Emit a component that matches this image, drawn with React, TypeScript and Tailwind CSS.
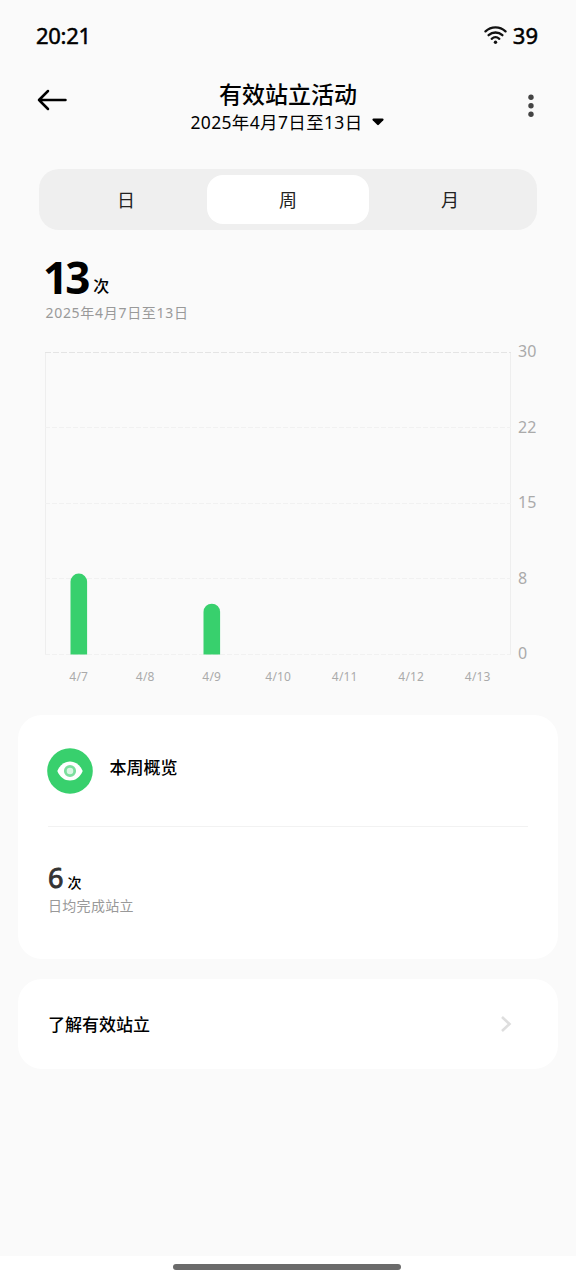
const FONT = "font-['Noto_Sans','Noto_Sans_CJK_SC',sans-serif]";

const tabs = ["日", "周", "月"];

const days = [
  { label: "4/7", count: 8 },
  { label: "4/8", count: 0 },
  { label: "4/9", count: 5 },
  { label: "4/10", count: 0 },
  { label: "4/11", count: 0 },
  { label: "4/12", count: 0 },
  { label: "4/13", count: 0 },
];

const ticks = ["30", "22", "15", "8", "0"];
const MAX = 30;

function StatusBar() {
  return (
    <div className="flex h-[70px] items-center justify-between pl-[36px] pr-[38px] text-[22px] [-webkit-text-stroke:0.5px_black]">
      <span className="tracking-[-0.3px]">20:21</span>
      <div className="flex items-center gap-[6px]">
        <svg width="23" height="19" viewBox="0 0 23 19" fill="none" stroke="#111" strokeWidth="2.3" strokeLinecap="round">
          <path d="M1.5 5.4C7.2.1 15.8.1 21.5 5.4" />
          <path d="M4.6 9.2c4-3.6 9.8-3.6 13.8 0" />
          <path d="M7.7 12.8c2.3-2 5.3-2 7.6 0" />
          <circle cx="11.5" cy="16.2" r="1.7" fill="#111" stroke="none" />
        </svg>
        <span>39</span>
      </div>
    </div>
  );
}

function Header() {
  return (
    <header className="flex h-[99px] items-start justify-between pl-[37px] pr-[42px]">
      <svg className="mt-[19px]" width="31" height="22" viewBox="0 0 31 22" fill="none" stroke="#000" strokeWidth="2.5" strokeLinecap="round" strokeLinejoin="round">
        <path d="M28.5 11H2M11 2 2 11l9 9" />
      </svg>
      <div className="flex flex-col items-center">
        <h1 className="mt-[9px] ml-[2px] text-[23px] leading-[30px] font-medium">有效站立活动</h1>
        <div className="mt-px flex items-center gap-[9px] text-[17.5px] leading-6">
          <span className="tracking-[0.35px]">2025年4月7日至13日</span>
          <svg width="12" height="8" viewBox="0 0 12 8" fill="#000">
            <path d="M1.5.5h9c1 0 1.4 1 .8 1.7L6.8 6.8c-.5.5-1.1.5-1.6 0L.7 2.2C.1 1.5.5.5 1.5.5Z" />
          </svg>
        </div>
      </div>
      <div className="mt-6 flex w-[28px] justify-end">
        <svg width="6" height="24" viewBox="0 0 6 24" fill="#444">
          <circle cx="3" cy="3.3" r="2.7" />
          <circle cx="3" cy="11.8" r="2.7" />
          <circle cx="3" cy="20.3" r="2.7" />
        </svg>
      </div>
    </header>
  );
}

function Tabs() {
  return (
    <div className="mx-[39px] flex h-[61px] rounded-[20px] bg-[#efefef] px-[6px] py-[6px] text-[18px] text-[#222]">
      {tabs.map((t) => (
        <button key={t} className={`flex flex-1 items-center justify-center rounded-2xl pt-[2px] ${t === "周" ? "bg-white" : ""}`}>
          {t}
        </button>
      ))}
    </div>
  );
}

function Chart() {
  return (
    <div className="mt-[28px] pl-[45px]">
      <div className="flex">
        <svg width="466" height="303" viewBox="0 0 466 303" fill="none">
          <path d="M.5 0v303M465.5 0v303" stroke="#eeeeee" />
          <path d="M0 .5h466" stroke="#e4e4e4" strokeDasharray="6 2" />
          {[75, 151, 226, 302].map((y) => (
            <path key={y} d={`M0 ${y + 0.5}h466`} stroke="#f1f1f1" strokeDasharray="5 2" />
          ))}
          {days.map((d, i) => {
            if (!d.count) return null;
            const x = 25.5 + i * 66.5;
            const top = 302 - (d.count / MAX) * 302;
            return <path key={d.label} d={`M${x} 302.5V${top + 8.3}a8.3 8.3 0 0 1 16.6 0V302.5Z`} fill="#38d06d" />;
          })}
        </svg>
        <div className="-mt-[11px] flex h-[322px] flex-col justify-between pl-[7px] text-[16px] leading-5 text-[#aaa]">
          {ticks.map((t) => (
            <span key={t}>{t}</span>
          ))}
        </div>
      </div>
      <div className="mt-[6px] ml-[0.5px] flex text-[12px] leading-4 tracking-[0.2px] text-[#aaa]">
        {days.map((d) => (
          <span key={d.label} className="w-[66.5px] text-center">{d.label}</span>
        ))}
      </div>
    </div>
  );
}

function Overview() {
  return (
    <section className="mx-[18px] mt-[30px] h-[244px] rounded-3xl bg-white px-[30px]">
      <div className="flex h-[112px] items-center border-b border-[#f2f2f2]">
        <svg className="-ml-px" width="46" height="46" viewBox="0 0 46 46">
          <circle cx="23" cy="23" r="22.8" fill="#38d06d" />
          <path d="M10.3 23C12.8 16.8 17.6 13.5 23 13.5S33.2 16.8 35.7 23C33.2 29.2 28.4 32.5 23 32.5S12.8 29.2 10.3 23Z" fill="#fff" />
          <circle cx="23" cy="23" r="4.7" fill="#d9f6e3" stroke="#7bdf9d" strokeWidth="2.8" />
        </svg>
        <h2 className="ml-[16.5px] -mt-[5px] text-[17px] font-medium">本周概览</h2>
      </div>
      <div className="mt-[35px] flex h-[33px] items-baseline gap-[4px] leading-8">
        <span className="text-[27px] text-[#333] [-webkit-text-stroke:0.9px_#333]">6</span>
        <span className="text-[14px] font-medium">次</span>
      </div>
      <p className="mt-px text-[14px] leading-5 tracking-[0.3px] text-[#999]">日均完成站立</p>
    </section>
  );
}

export default function App() {
  return (
    <div className={`flex h-[1280px] w-[576px] flex-col overflow-hidden bg-[#fafafa] text-black ${FONT}`}>
      <StatusBar />
      <Header />
      <Tabs />
      <div className="mt-[23px] flex h-[48px] items-baseline gap-[6px] pl-[43px]">
        <span className="text-[44px] leading-[48px] font-bold tracking-[-3px]">13</span>
        <span className="relative -top-[2px] text-[16px] font-medium">次</span>
      </div>
      <p className="mt-px pl-[45.5px] text-[14px] leading-[22px] tracking-[0.7px] text-[#999]">2025年4月7日至13日</p>
      <Chart />
      <Overview />
      <button className="mx-[18px] mt-5 flex h-[90px] items-center justify-between rounded-3xl bg-white pl-[30px] pr-[46px]">
        <span className="mt-px text-[17px] font-medium">了解有效站立</span>
        <svg width="12" height="18" viewBox="0 0 12 18" fill="none" stroke="#dedede" strokeWidth="2.6">
          <path d="m2 2 7.5 7L2 16" />
        </svg>
      </button>
      <div className="mt-auto flex h-6 justify-center bg-white pt-[8px] pr-[3px]">
        <div className="h-[6px] w-[228px] rounded-full bg-[#6b6b6b]" />
      </div>
    </div>
  );
}
